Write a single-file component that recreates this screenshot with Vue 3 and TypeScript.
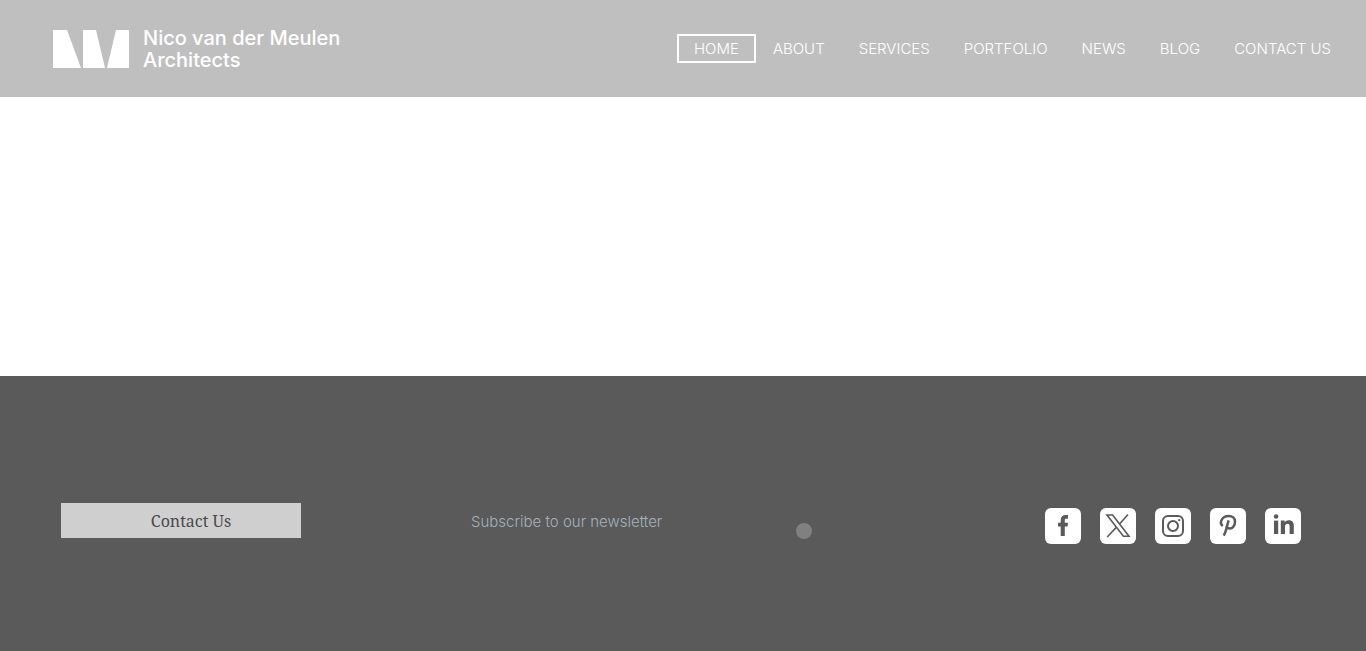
<script setup lang="ts">
interface NavItem {
  label: string
  href: string
  current?: boolean
}

interface SocialLink {
  name: string
  href: string
  paths: string[]
  stroked?: boolean
}

const navItems: NavItem[] = [
  { label: 'HOME', href: '#home', current: true },
  { label: 'ABOUT', href: '#about' },
  { label: 'SERVICES', href: '#services' },
  { label: 'PORTFOLIO', href: '#portfolio' },
  { label: 'NEWS', href: '#news' },
  { label: 'BLOG', href: '#blog' },
  { label: 'CONTACT US', href: '#contact' },
]

const socialLinks: SocialLink[] = [
  {
    name: 'Facebook',
    href: '#facebook',
    paths: ['M15.7 28V18.6H13V14.8H15.7V12.4C15.7 8.9 17.4 7 20.6 7H23V10.8H21.3C20.1 10.8 19.8 11.3 19.8 12.5V14.8H23L22.6 18.6H19.8V28Z'],
  },
  {
    name: 'X',
    href: '#x',
    stroked: true,
    paths: ['M7 7H12.6L29 28.2H23.4Z', 'M28 6.5L19.3 16.3', 'M16.3 19.4L7.2 29'],
  },
  {
    name: 'Instagram',
    href: '#instagram',
    stroked: true,
    paths: [
      'M13 8H23A5 5 0 0 1 28 13V23A5 5 0 0 1 23 28H13A5 5 0 0 1 8 23V13A5 5 0 0 1 13 8Z',
      'M18 13A5 5 0 1 1 18 23A5 5 0 1 1 18 13Z',
      'M23.2 12.1H25.2',
    ],
  },
  {
    name: 'Pinterest',
    href: '#pinterest',
    stroked: true,
    paths: [
      'M12.8 18C10.9 16.6 10.6 14 11.6 12C12.9 9.4 15.6 8 18.6 8C22.4 8 25 10.2 25 13.5C25 17.3 22.7 20.6 19.9 20.6C18 20.6 16.8 19.6 16.4 18.4',
      'M18.6 12.4L16.2 21.4Q15.2 25.2 13.8 27.6',
    ],
  },
  {
    name: 'LinkedIn',
    href: '#linkedin',
    paths: [
      'M9 12.6H13.2V26H9Z',
      'M11.1 6.2A2.3 2.3 0 1 1 11.1 10.8A2.3 2.3 0 1 1 11.1 6.2Z',
      'M15.8 12.6H19.7V14.4C20.5 13 21.9 12.2 23.8 12.2C27.6 12.2 28.8 14.6 28.8 18V26H24.6V18.8C24.6 17 24.2 15.8 22.6 15.8C20.7 15.8 20 17.2 20 19V26H15.8Z',
    ],
  },
]
</script>

<template>
  <div class="page">
    <header class="header">
      <a class="brand" href="#home" aria-label="Nico van der Meulen Architects">
        <svg class="mark" viewBox="0 0 76 38" aria-hidden="true">
          <path d="M0 0H14L28 38H0ZM30 0H43L52 38H30ZM63 0H76V38H54Z" />
        </svg>
        <span class="brand-name">Nico van der Meulen<br />Architects</span>
      </a>
      <nav class="nav" aria-label="Main">
        <a
          v-for="item in navItems"
          :key="item.label"
          class="nav-link"
          :class="{ current: item.current }"
          :href="item.href"
          :aria-current="item.current ? 'page' : undefined"
        >{{ item.label }}</a>
      </nav>
    </header>

    <main class="content"></main>

    <footer class="footer">
      <a class="contact-button" href="#contact">Contact Us</a>
      <div class="newsletter">
        <a class="subscribe" href="#newsletter">Subscribe to our newsletter</a>
        <span class="dot" aria-hidden="true"></span>
      </div>
      <div class="socials">
        <a
          v-for="link in socialLinks"
          :key="link.name"
          class="social"
          :href="link.href"
          :aria-label="link.name"
        >
          <svg viewBox="0 0 36 36" aria-hidden="true">
            <rect class="tile" width="36" height="36" rx="6" />
            <path
              v-for="d in link.paths"
              :key="d"
              :class="[link.stroked ? 'line' : 'solid', link.name.toLowerCase()]"
              :d="d"
            />
          </svg>
        </a>
      </div>
    </footer>
  </div>
</template>

<style>
body {
  margin: 0;
  background: #fff;
}
</style>

<style scoped>
.page {
  min-height: 100vh;
  display: flex;
  flex-direction: column;
  font-family: Inter, "Liberation Sans", sans-serif;
}

a {
  color: inherit;
  text-decoration: none;
}

.header {
  box-sizing: border-box;
  min-height: 97px;
  padding: 0 18px 0 53px;
  display: flex;
  align-items: center;
  justify-content: space-between;
  background: #bfbfbf;
  color: #fff;
}

.brand {
  display: flex;
  align-items: center;
  gap: 14px;
}

.mark {
  width: 76px;
  height: 38px;
  fill: #fff;
}

.brand-name {
  font-size: 20px;
  font-weight: 500;
  line-height: 22px;
}

.nav {
  display: flex;
}

.nav-link {
  padding: 0 15px;
  border: 2px solid transparent;
  font-size: 15px;
  font-weight: 300;
  line-height: 25px;
  white-space: nowrap;
}

.nav-link.current {
  border-color: #fff;
}

.content {
  flex: 1;
}

.footer {
  box-sizing: border-box;
  min-height: 275px;
  padding: 127px 65px 80px 61px;
  display: grid;
  grid-template-columns: 410px 1fr auto;
  align-items: start;
  background: #5a5a5a;
}

.contact-button {
  box-sizing: border-box;
  width: 240px;
  padding: 1px 0 0 20px;
  background: #cfcfcf;
  color: #4a4a4a;
  font-family: "Noto Serif", "Liberation Serif", serif;
  font-size: 16px;
  line-height: 34px;
  text-align: center;
}

.newsletter {
  display: flex;
  align-items: flex-end;
  gap: 134px;
  padding-top: 2px;
}

.subscribe {
  color: #a5b1bb;
  font-size: 15px;
  font-weight: 300;
  line-height: 34px;
}

.dot {
  width: 16px;
  height: 16px;
  border-radius: 50%;
  background: #808080;
}

.socials {
  display: flex;
  gap: 19px;
  padding-top: 5px;
}

.social,
.social svg {
  display: block;
  width: 36px;
  height: 36px;
}

.tile {
  fill: #fff;
}

.solid {
  fill: #5a5a5a;
}

.line {
  fill: none;
  stroke: #5a5a5a;
  stroke-width: 2;
}

.line.x {
  stroke-width: 1.6;
}

.line.pinterest {
  stroke-width: 2.5;
}
</style>
